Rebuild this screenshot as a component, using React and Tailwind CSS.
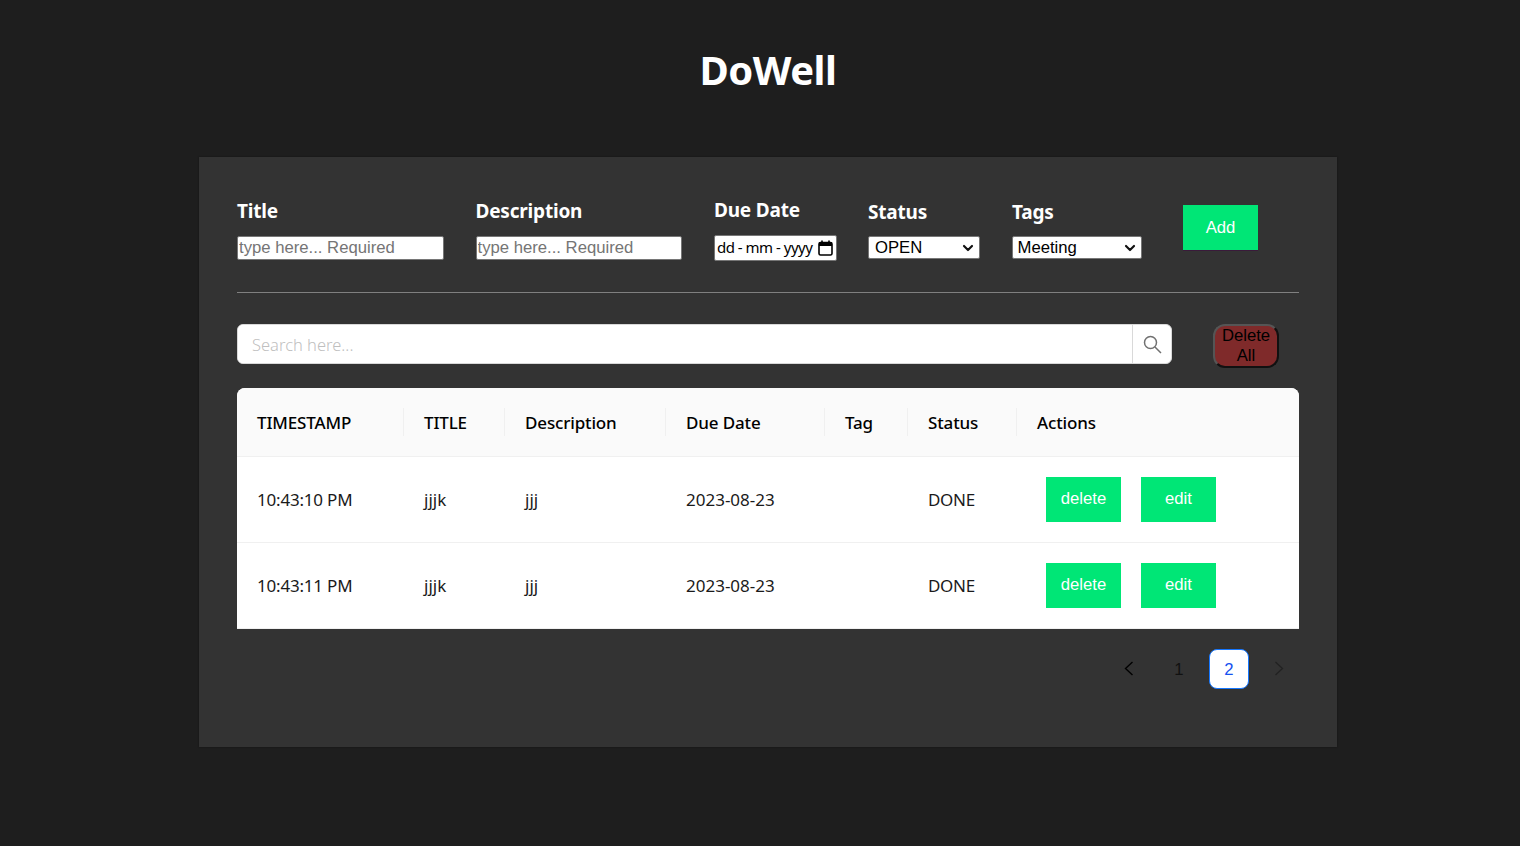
import { ChevronDown } from 'lucide-react'

const UI = "font-['Noto_Sans',sans-serif]"
const ARIAL = "font-['Liberation_Sans',sans-serif]"

const COLUMNS = [
  { label: 'TIMESTAMP', width: 'w-[167px]' },
  { label: 'TITLE', width: 'w-[101px]' },
  { label: 'Description', width: 'w-[161px]' },
  { label: 'Due Date', width: 'w-[159px]' },
  { label: 'Tag', width: 'w-[83px]' },
  { label: 'Status', width: 'w-[109px]' },
  { label: 'Actions', width: 'w-[282px]' },
]

const ROWS = [
  { time: '10:43:10 PM', title: 'jjjk', desc: 'jjj', due: '2023-08-23', tag: '', status: 'DONE' },
  { time: '10:43:11 PM', title: 'jjjk', desc: 'jjj', due: '2023-08-23', tag: '', status: 'DONE' },
]

function Label({ children, className = '' }) {
  return <label className={`block text-[19px] leading-[26px] font-bold text-white tracking-[-0.2px] ${UI} ${className}`}>{children}</label>
}

function FieldInput({ label, width, mr }) {
  return (
    <div className={`${width} ${mr} shrink-0`}>
      <Label>{label}</Label>
      <input
        readOnly
        placeholder="type here... Required"
        className={`mt-[12px] block h-[24px] w-full rounded-[2px] border border-[#767676] bg-white px-[1px] text-[16.7px] text-black placeholder:text-[#757575] ${ARIAL}`}
      />
    </div>
  )
}

function FieldSelect({ label, value, width, mr, pad }) {
  return (
    <div className={`${width} ${mr} shrink-0 pt-[1px]`}>
      <Label>{label}</Label>
      <div className={`mt-[11px] flex h-[23px] w-full items-center justify-between rounded-[2px] border border-[#767676] bg-white ${pad} pr-[3px] text-[16.7px] text-black ${ARIAL}`}>
        <span>{value}</span>
        <ChevronDown size={16} strokeWidth={3.2} className="text-[#111]" />
      </div>
    </div>
  )
}

function CalendarIcon() {
  return (
    <svg width="15" height="16" viewBox="0 0 15 16" className="shrink-0 text-black" fill="none">
      <rect x="1" y="2.5" width="13" height="12.5" rx="1.5" stroke="currentColor" strokeWidth="1.6" />
      <rect x="1" y="2.5" width="13" height="3.5" fill="currentColor" />
      <path d="M4 0.5v2M11 0.5v2" stroke="currentColor" strokeWidth="1.6" />
    </svg>
  )
}

function ActionButton({ children }) {
  return (
    <button className={`h-[45px] w-[75px] bg-[#00e676] text-[16.7px] text-white ${ARIAL}`}>{children}</button>
  )
}

export default function App() {
  return (
    <div className="min-h-[846px] bg-[#1e1e1e] pt-[43px]">
      <h1 className={`ml-[16px] text-center text-[40px] leading-[54px] font-bold text-white tracking-[-0.5px] ${UI}`}>DoWell</h1>

      <div className="mt-[60px] ml-[199px] h-[590px] w-[1138px] bg-[#333333] px-[38px] pt-[41px] shadow-[0_0_2px_rgba(0,0,0,0.4)]">
        {/* add form */}
        <div className="flex items-start">
          <FieldInput label="Title" width="w-[207px]" mr="mr-[31.5px]" />
          <FieldInput label="Description" width="w-[206.5px]" mr="mr-[32px]" />
          <div className="mr-[31px] w-[123px] shrink-0">
            <Label className="mt-[-1px]">Due Date</Label>
            <div className={`mt-[12px] flex h-[26px] w-full items-center justify-between rounded-[2px] border border-[#767676] bg-white pl-[2px] pr-[3px] text-[15px] text-black ${UI}`}>
              <span className="relative top-[-1px] tracking-[-0.5px] whitespace-nowrap">dd - mm - yyyy</span>
              <CalendarIcon />
            </div>
          </div>
          <FieldSelect label="Status" value="OPEN" width="w-[112px]" mr="mr-[32px]" pad="pl-[6px]" />
          <FieldSelect label="Tags" value="Meeting" width="w-[130px]" mr="mr-[41px]" pad="pl-[4.5px]" />
          <button className={`mt-[7px] h-[45px] w-[75px] bg-[#00e676] text-[16.7px] text-white shadow-[0_1px_0_#3a1a3a] ${ARIAL}`}>Add</button>
        </div>

        <hr className="mt-[31px] border-0 border-t border-[#808080]" />

        {/* search + delete all */}
        <div className="mt-[31px] flex items-start">
          <div className="flex h-[40px] w-[935px] overflow-hidden rounded-[6px] border border-[#d9d9d9] bg-white">
            <input
              readOnly
              placeholder="Search here..."
              className={`h-full flex-1 bg-white pl-[14px] text-[16.5px] text-black placeholder:text-[#bfbfbf] placeholder:font-light ${UI}`}
            />
            <div className="flex w-[39px] items-center justify-center border-l border-[#d9d9d9]">
              <svg width="19" height="19" viewBox="0 0 19 19" fill="none" stroke="#707070" strokeWidth="1.5">
                <circle cx="7.5" cy="7.5" r="6" />
                <path d="M12 12L18 18" />
              </svg>
            </div>
          </div>
          <button className={`ml-[41px] h-[44px] w-[66px] rounded-[12px] border-2 border-t-[#555] border-l-[#555] border-r-[#111] border-b-[#111] bg-[#7f2a2a] text-[16.7px] leading-[20px] text-black ${ARIAL}`}>Delete All</button>
        </div>

        {/* tasks table */}
        <div className="mt-[20px] w-[1062px] overflow-hidden rounded-t-[8px] bg-white">
          <table className={`w-full table-fixed border-collapse text-[17px] text-[#1a1a1a] ${UI}`}>
            <thead>
              <tr className="h-[68px] border-b border-[#f0f0f0] bg-[#fafafa]">
                {COLUMNS.map((col, i) => (
                  <th key={col.label} className={`${col.width} relative px-[20px] pt-[2px] text-left font-medium tracking-[-0.15px] text-black`}>
                    {col.label}
                    {i < COLUMNS.length - 1 && <span className="absolute right-0 top-[20px] h-[28px] w-px bg-[#f0f0f0]" />}
                  </th>
                ))}
              </tr>
            </thead>
            <tbody>
              {ROWS.map((row) => (
                <tr key={row.time} className="h-[86px] border-b border-[#f0f0f0]">
                  <td className="px-[20px] pt-[2px] tracking-[-0.2px]">{row.time}</td>
                  <td className="px-[20px] pt-[2px]">{row.title}</td>
                  <td className="px-[20px] pt-[2px]">{row.desc}</td>
                  <td className="px-[20px] pt-[2px]">{row.due}</td>
                  <td className="px-[20px] pt-[2px]">{row.tag}</td>
                  <td className="px-[20px] pt-[2px] tracking-[-0.3px]">{row.status}</td>
                  <td className="px-[20px]">
                    <div className="ml-[9px] flex gap-[20px]">
                      <ActionButton>delete</ActionButton>
                      <ActionButton>edit</ActionButton>
                    </div>
                  </td>
                </tr>
              ))}
            </tbody>
          </table>
        </div>

        {/* pagination */}
        <div className={`mt-[20px] flex w-[1062px] justify-end gap-[10px] text-[16.7px] ${ARIAL}`}>
          <div className="flex size-[40px] items-center justify-center text-black">
            <svg width="10" height="15" viewBox="0 0 10 15" fill="none" stroke="currentColor" strokeWidth="1.4"><path d="M8.5 1L1.5 7.5L8.5 14" /></svg>
          </div>
          <div className="flex size-[40px] items-center justify-center pt-[3px] text-[#111]">1</div>
          <div className="flex size-[40px] items-center justify-center rounded-[8px] border border-[#1677ff] bg-white pt-[3px] text-[#1652f0]">2</div>
          <div className="flex size-[40px] items-center justify-center text-[#222]">
            <svg width="10" height="15" viewBox="0 0 10 15" fill="none" stroke="currentColor" strokeWidth="1.3"><path d="M1.5 1L8.5 7.5L1.5 14" /></svg>
          </div>
        </div>
      </div>
    </div>
  )
}
